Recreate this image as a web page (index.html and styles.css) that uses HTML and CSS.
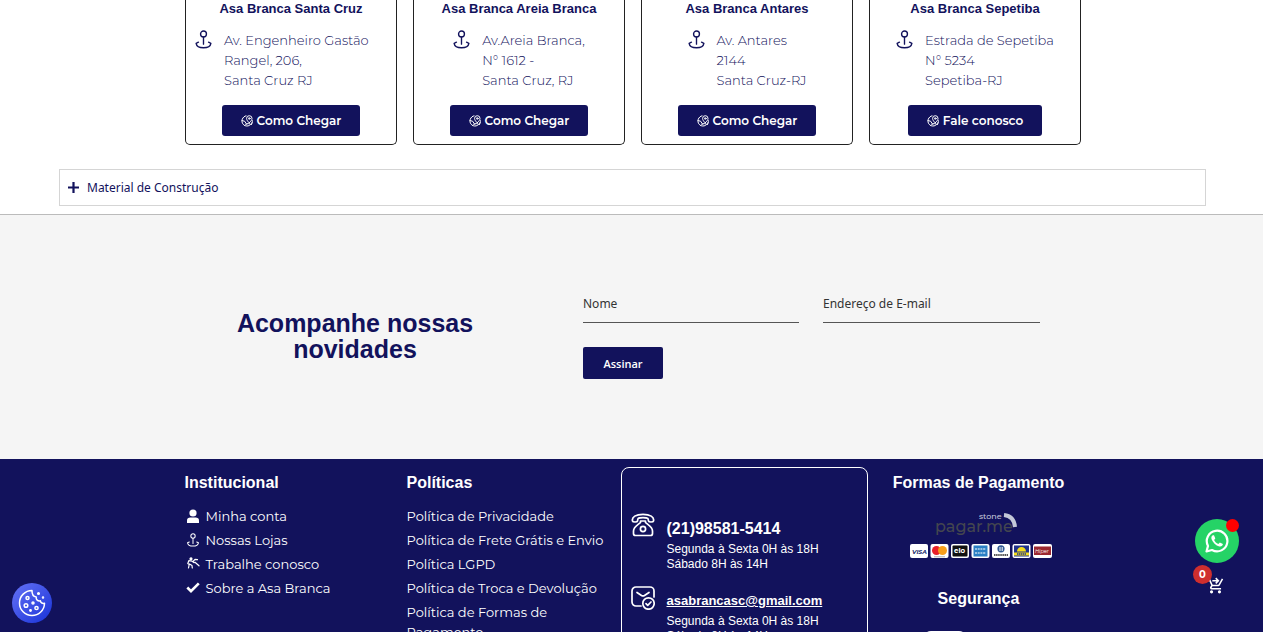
FILE: index.html
```html
<!DOCTYPE html>
<html lang="pt-BR">
<head>
<meta charset="utf-8">
<meta name="viewport" content="width=device-width, initial-scale=1">
<title>Asa Branca</title>
<link rel="stylesheet" href="styles.css">
</head>
<body>
<svg class="sprite" aria-hidden="true">
  <symbol id="pin" viewBox="0 0 16 18">
    <g fill="none" stroke="currentColor" stroke-width="1.3" stroke-linecap="round" stroke-linejoin="round">
      <circle cx="8" cy="3.8" r="2.8"/><path d="M8 6.6v6.800M3.200 11.600L1 12.600c.4 2.600 3 4.200 7 4.200s6.600-1.600 7-4.200l-2.200-1"/>
    </g>
  </symbol>
  <symbol id="globe" viewBox="0 0 12 12">
    <g fill="none" stroke="currentColor" stroke-width="1" stroke-linecap="round">
      <path d="M5 .8a5.200 5.200 0 1 0 6 6.800"/><path d="M8.200 7.800C6.700 6.300 5.600 5 5.600 3.400a2.700 2.700 0 0 1 5.400 0c0 1.600-1.200 2.900-2.800 4.400z"/><circle cx="8.300" cy="3.500" r=".8"/><path d="M1 5.600l2.600.6 2 3M3.600 10.600c1.500-2 3-2.600 5.600-1.600M11.300 5.500c.3 1.500 0 3-1 4.200"/>
    </g>
  </symbol>
</svg>

<main>
  <section class="stores">
    <article class="store">
      <h3>Asa Branca Santa Cruz</h3>
      <div class="address"><svg><use href="#pin"/></svg><p>Av. Engenheiro Gastão Rangel, 206,<br>Santa Cruz RJ</p></div>
      <a class="btn" href="#"><svg><use href="#globe"/></svg>Como Chegar</a>
    </article>
    <article class="store">
      <h3>Asa Branca Areia Branca</h3>
      <div class="address"><svg><use href="#pin"/></svg><p>Av.Areia Branca,<br>N° 1612 -<br>Santa Cruz, RJ</p></div>
      <a class="btn" href="#"><svg><use href="#globe"/></svg>Como Chegar</a>
    </article>
    <article class="store">
      <h3>Asa Branca Antares</h3>
      <div class="address"><svg><use href="#pin"/></svg><p>Av. Antares<br>2144<br>Santa Cruz-RJ</p></div>
      <a class="btn" href="#"><svg><use href="#globe"/></svg>Como Chegar</a>
    </article>
    <article class="store">
      <h3>Asa Branca Sepetiba</h3>
      <div class="address"><svg><use href="#pin"/></svg><p>Estrada de Sepetiba<br>N° 5234<br>Sepetiba-RJ</p></div>
      <a class="btn" href="#"><svg><use href="#globe"/></svg>Fale conosco</a>
    </article>
  </section>

  <button class="accordion" type="button" aria-expanded="false">
    <svg viewBox="0 0 10 10"><path d="M5 0v10M0 5h10" stroke="currentColor" stroke-width="2"/></svg>Material de Construção
  </button>

  <section class="news">
    <h2>Acompanhe nossas novidades</h2>
    <form class="news-form">
      <input type="text" placeholder="Nome" aria-label="Nome">
      <input type="email" placeholder="Endereço de E-mail" aria-label="Endereço de E-mail">
      <button type="submit">Assinar</button>
    </form>
  </section>
</main>

<footer class="footer">
  <div class="footer-grid">
    <nav class="links">
      <h4>Institucional</h4>
      <a href="#"><svg viewBox="0 0 14 14"><circle cx="7" cy="4" r="3.600" fill="currentColor"/><path d="M1 14v-2.500C1 9.500 2.500 8.600 4.200 8.600h5.600c1.700 0 3.200.9 3.200 2.900V14z" fill="currentColor"/></svg>Minha conta</a>
      <a href="#"><svg><use href="#pin"/></svg>Nossas Lojas</a>
      <a href="#"><svg viewBox="0 0 14 14" fill="none" stroke="currentColor" stroke-width="1.200" stroke-linecap="round" stroke-linejoin="round"><circle cx="5" cy="1.800" r="1" fill="currentColor"/><path d="M2.500 11l.7-3.500L1.800 6.500l1-2.800L6 4.200l2.200 1.500M3.500 7l2.500 1.500.3 2.500M7 4.500L9 2.300l2.500.4M9 5.200l4 3.600"/></svg>Trabalhe conosco</a>
      <a href="#"><svg viewBox="0 0 14 14"><path d="M1.300 6.500l3.700 3.700L12.800 2.400" fill="none" stroke="currentColor" stroke-width="2.600"/></svg>Sobre a Asa Branca</a>
    </nav>
    <nav class="links">
      <h4>Políticas</h4>
      <a href="#">Política de Privacidade</a>
      <a href="#">Política de Frete Grátis e Envio</a>
      <a href="#">Política LGPD</a>
      <a href="#">Política de Troca e Devolução</a>
      <a href="#">Política de Formas de<br>Pagamento</a>
    </nav>
    <section class="contact">
      <div class="contact-item">
        <svg viewBox="0 0 24 24" fill="none" stroke="currentColor" stroke-width="1.700" stroke-linejoin="round" stroke-linecap="round"><path d="M1.500 8C.5 4 5 1.300 12 1.300S23.500 4 22.500 8c-.3 1.300-4.700 1.300-5 0-.3-1-.2-2-.8-2.700-1-.9-8.400-.9-9.400 0-.6.7-.5 1.700-.8 2.700-.3 1.300-4.700 1.300-5 0z"/><path d="M9.500 8v1.500c-2 2-7 4-7 8.500v2.500c0 1.200.8 2 2 2h15c1.200 0 2-.8 2-2V18c0-4.500-5-6.500-7-8.500V8z"/><circle cx="12" cy="16" r="2.600"/></svg>
        <div><h4>(21)98581-5414</h4><p>Segunda à Sexta 0H às 18H<br>Sábado 8H às 14H</p></div>
      </div>
      <div class="contact-item mail">
        <svg viewBox="0 0 24 24" fill="none" stroke="currentColor" stroke-width="1.700" stroke-linejoin="round" stroke-linecap="round"><path d="M10 20H5a4 4 0 0 1-4-4V5a4 4 0 0 1 4-4h14a4 4 0 0 1 4 4v6"/><path d="M6 6.500l4.500 3c1 .6 2 .6 3 0l4.500-3"/><circle cx="17.500" cy="17.500" r="5.700"/><path d="M15 17.700l1.700 1.600 3.300-3.300"/></svg>
        <div><a href="#">asabrancasc@gmail.com</a><p>Segunda à Sexta 0H às 18H<br>Sábado 8H às 14H</p></div>
      </div>
    </section>
    <section class="pay">
      <h4>Formas de Pagamento</h4>
      <svg class="pay-logos" viewBox="0 0 144 48" role="img" aria-label="Formas de pagamento">
        <text x="70" y="9" font-size="8" font-weight="500" fill="#c3c6da">stone</text>
        <text x="26" y="22" font-size="16" font-weight="500" fill="#44464f">pagar.me</text>
        <path d="M95 5q10 1 11 12" fill="none" stroke="#c3c8d8" stroke-width="4"/>
        <g fill="#fff"><rect x="1" y="34" width="18" height="14" rx="2"/><rect x="21.500" y="34" width="18" height="14" rx="2"/><rect x="42" y="34" width="18" height="14" rx="2"/><rect x="62.500" y="34" width="18" height="14" rx="2"/><rect x="83" y="34" width="18" height="14" rx="2"/><rect x="103.500" y="34" width="18" height="14" rx="2"/><rect x="124" y="34" width="19" height="14" rx="2"/></g>
        <text x="3" y="43.500" font-size="6" font-weight="bold" font-style="italic" fill="#1a2a6c">VISA</text>
        <circle cx="27.500" cy="40.500" r="4.500" fill="#e8202a"/><circle cx="33.500" cy="40.500" r="4.500" fill="#f79e1b"/><path d="M25 46.800h11" stroke="#777" stroke-width=".6"/>
        <rect x="43.500" y="35.500" width="15" height="11" rx="1" fill="#111"/><text x="45" y="43" font-size="7" font-weight="bold" fill="#fff">elo</text>
        <rect x="64.500" y="35.500" width="14" height="11" fill="#2a7fc4"/><path d="M66 39h11M66 43h11" stroke="#b9d8ee" stroke-width="1.500" stroke-dasharray="2 .7"/>
        <circle cx="92" cy="38.800" r="3.600" fill="#315a94"/><path d="M91 37v4M93.200 37v4" stroke="#fff"/><path d="M85 45h14" stroke="#555" stroke-width="1.800" stroke-dasharray="1.500 .6"/>
        <rect x="105" y="35.500" width="15" height="11" fill="#21338c"/><path d="M108 41.500a4.500 4.500 0 0 1 9 0zM105 42.500h15v3h-15z" fill="#f5dd1c"/><path d="M108 44h9" stroke="#21338c" stroke-width="1.500" stroke-dasharray="1.500 .5"/>
        <rect x="125" y="36.500" width="17" height="8.500" fill="#9c2830"/><text x="126" y="42.500" font-size="5" font-style="italic" fill="#fff">Hiper</text>
      </svg>
      <h4>Segurança</h4>
      <div class="seal"></div>
    </section>
  </div>
</footer>

<button class="cookie" type="button" aria-label="Preferências de cookies">
  <svg viewBox="0 0 28 28" fill="none" stroke="#fff" stroke-width="1.500" stroke-linejoin="round"><path d="M14 1.500a12.500 12.500 0 1 0 12.500 12.700c-2 .6-3.700-.3-4.100-2.400-2.600.5-4.600-1-4.200-3.800-2.700-.3-4.300-2.800-4.200-6.500z"/><circle cx="9.500" cy="9" r="1.500"/><circle cx="8" cy="16.500" r="1.800"/><circle cx="15" cy="14" r="1"/><circle cx="18.500" cy="19" r="1.600"/><circle cx="12.500" cy="21.500" r=".7"/><circle cx="20.500" cy="4.500" r=".8"/><circle cx="25" cy="8.500" r=".5"/></svg>
</button>
<a class="whats" href="#" aria-label="WhatsApp">
  <svg viewBox="0 0 24 24" fill="none"><path d="M1.500 22.500l1.500-5.600A10.300 10.300 0 1 1 7 21z" stroke="#fff" stroke-width="2.200" stroke-linejoin="round"/><path d="M8 6.200c-1.500.5-2 2.300-1.400 4 1.200 3.200 4.200 6.200 7.700 7.300 1.800.5 3.500-.6 3.600-2.400l-3-1.600-1.600 1.600c-1.900-.8-3.300-2.200-4.200-4l1.200-1.500L9 6.200z" fill="#fff"/></svg>
  <span class="dot"></span>
</a>
<a class="cart" href="#" aria-label="Carrinho">
  <svg viewBox="0 0 24 24" fill="#fff"><path d="M8 5h5.200l-1.600-1.600L13 2l4 4-4 4-1.400-1.400L13.200 7H8zM7 18a2 2 0 1 0 0 4 2 2 0 0 0 0-4zm10 0a2 2 0 1 0 0 4 2 2 0 0 0 0-4zM8.100 13h7.500c.7 0 1.400-.4 1.700-1L21.700 4l-1.700-1-4.400 8H8.500L4.300 2H1v2h2l3.600 7.600L5.200 14c-.7 1.300.2 3 1.800 3h12v-2H7z"/></svg>
  <span class="count">0</span>
</a>
</body>
</html>
```

FILE: styles.css
```css
* { box-sizing: border-box; }
body {
  margin: 0;
  height: 100vh;
  overflow: hidden;
  background: #fff;
  color: #12125c;
  font-family: Montserrat, Inter, sans-serif;
  font-size: 13px;
}
h2, h3, h4, p { margin: 0; }
h2, h3, h4, .contact { font-family: "Liberation Sans", Arial, sans-serif; }
a { color: inherit; text-decoration: none; }
.sprite { position: absolute; width: 0; height: 0; }

.stores {
  display: grid;
  grid-template-columns: repeat(4, 1fr);
  gap: 16px;
  max-width: 899px;
  margin: 0 auto;
  padding-left: 3px;
}
.store {
  display: flex;
  flex-direction: column;
  align-items: center;
  padding: 0 9px 8px;
  border: 1px solid #222;
  border-top: 0;
  border-radius: 0 0 5px 5px;
}
.store h3 { font-size: 13px; line-height: 18px; }
.address { display: flex; gap: 12px; margin: 12px 0 15px; }
.address svg { flex: none; width: 17px; height: 19px; }
.address p { line-height: 20px; font-weight: 300; }
.btn {
  display: flex;
  align-items: center;
  gap: 4px;
  height: 31px;
  padding: 0 19px;
  border-radius: 3px;
  background: #12125c;
  color: #fff;
  font-size: 12px;
  font-weight: 600;
}
.btn svg { width: 12px; height: 12px; }

.accordion {
  display: flex;
  align-items: center;
  gap: 8px;
  width: calc(100% - 116px);
  height: 37px;
  margin: 24px 57px 8px 59px;
  padding: 0 8px;
  border: 1px solid #d5d5d5;
  background: #fff;
  color: #12125c;
  font: 12px "Noto Sans", sans-serif;
}
.accordion svg { width: 11px; height: 11px; }

.news {
  display: grid;
  grid-template-columns: 342px 496px;
  justify-content: center;
  column-gap: 57px;
  align-items: center;
  padding: 72px 0 80px;
  border-top: 1px solid #bbb;
  background: #f5f5f5;
}
.news h2 { padding: 6px 48px 0; font-size: 25px; line-height: 26px; text-align: center; }
.news-form { display: grid; grid-template-columns: 216px 1fr; gap: 24px; padding-right: 39px; }
.news-form input {
  width: 100%;
  height: 36px;
  padding: 0 0 2px;
  border: 0;
  border-bottom: 1px solid #555;
  background: none;
  font: 12px "Noto Sans", sans-serif;
}
.news-form input::placeholder { color: #333; opacity: 1; }
.news-form button {
  width: 80px;
  height: 32px;
  border: 0;
  border-radius: 2px;
  background: #12125c;
  color: #fff;
  font: 600 11px "Open Sans", sans-serif;
}

.footer { background: #12125c; color: #fff; }
.footer-grid {
  display: grid;
  grid-template-columns: 222px 214px 247px 222px;
  justify-content: center;
  padding-left: 11px;
}
.footer h4 { font-size: 16px; line-height: 18px; }
.links { display: flex; flex-direction: column; padding-top: 15px; }
.links h4 { margin-bottom: 12px; }
.links a { display: flex; align-items: center; gap: 5px; padding: 2px 0; line-height: 20px; }
.links svg { width: 16px; height: 14px; }
.contact {
  margin-top: 8px;
  padding: 45px 9px 40px;
  border: 1px solid #fff;
  border-radius: 8px;
}
.contact-item { display: flex; gap: 12px; font-size: 12px; line-height: 15px; }
.contact-item svg { width: 24px; height: 24px; flex: none; }
.contact-item h4 { margin: 7px 0 4px; }
.mail { margin-top: 14px; }
.mail a { display: block; margin: 6px 0 5px; font-size: 13px; line-height: 17px; font-weight: bold; text-decoration: underline; }
.pay { display: flex; flex-direction: column; align-items: center; padding-top: 15px; }
.pay-logos { width: 144px; height: 48px; margin: 18px 0 32px 4px; font-family: Montserrat, Inter, sans-serif; }
.seal { width: 44px; height: 20px; margin: 23px 68px 0 0; border-radius: 8px; background: #fff; }

.cookie {
  position: fixed;
  left: 12px;
  bottom: 9px;
  display: grid;
  place-items: center;
  width: 40px;
  height: 40px;
  padding: 0;
  border: 0;
  border-radius: 50%;
  background: linear-gradient(135deg, #6672f5, #1732d8);
}
.cookie svg { width: 28px; height: 28px; }
.whats {
  position: fixed;
  right: 24px;
  bottom: 69px;
  display: grid;
  place-items: center;
  width: 44px;
  height: 44px;
  border-radius: 50%;
  background: #25d366;
}
.whats svg { width: 24px; height: 24px; }
.dot { position: absolute; top: 0; right: 0; width: 13px; height: 13px; border-radius: 50%; background: #f00; }
.cart { position: fixed; right: 38px; bottom: 37px; width: 19px; height: 19px; }
.cart svg { width: 19px; height: 19px; }
.count {
  position: absolute;
  right: 13px;
  bottom: 11px;
  width: 19px;
  height: 19px;
  border-radius: 50%;
  background: #cf2e2e;
  color: #fff;
  font-size: 10px;
  font-weight: bold;
  line-height: 19px;
  text-align: center;
}
```
